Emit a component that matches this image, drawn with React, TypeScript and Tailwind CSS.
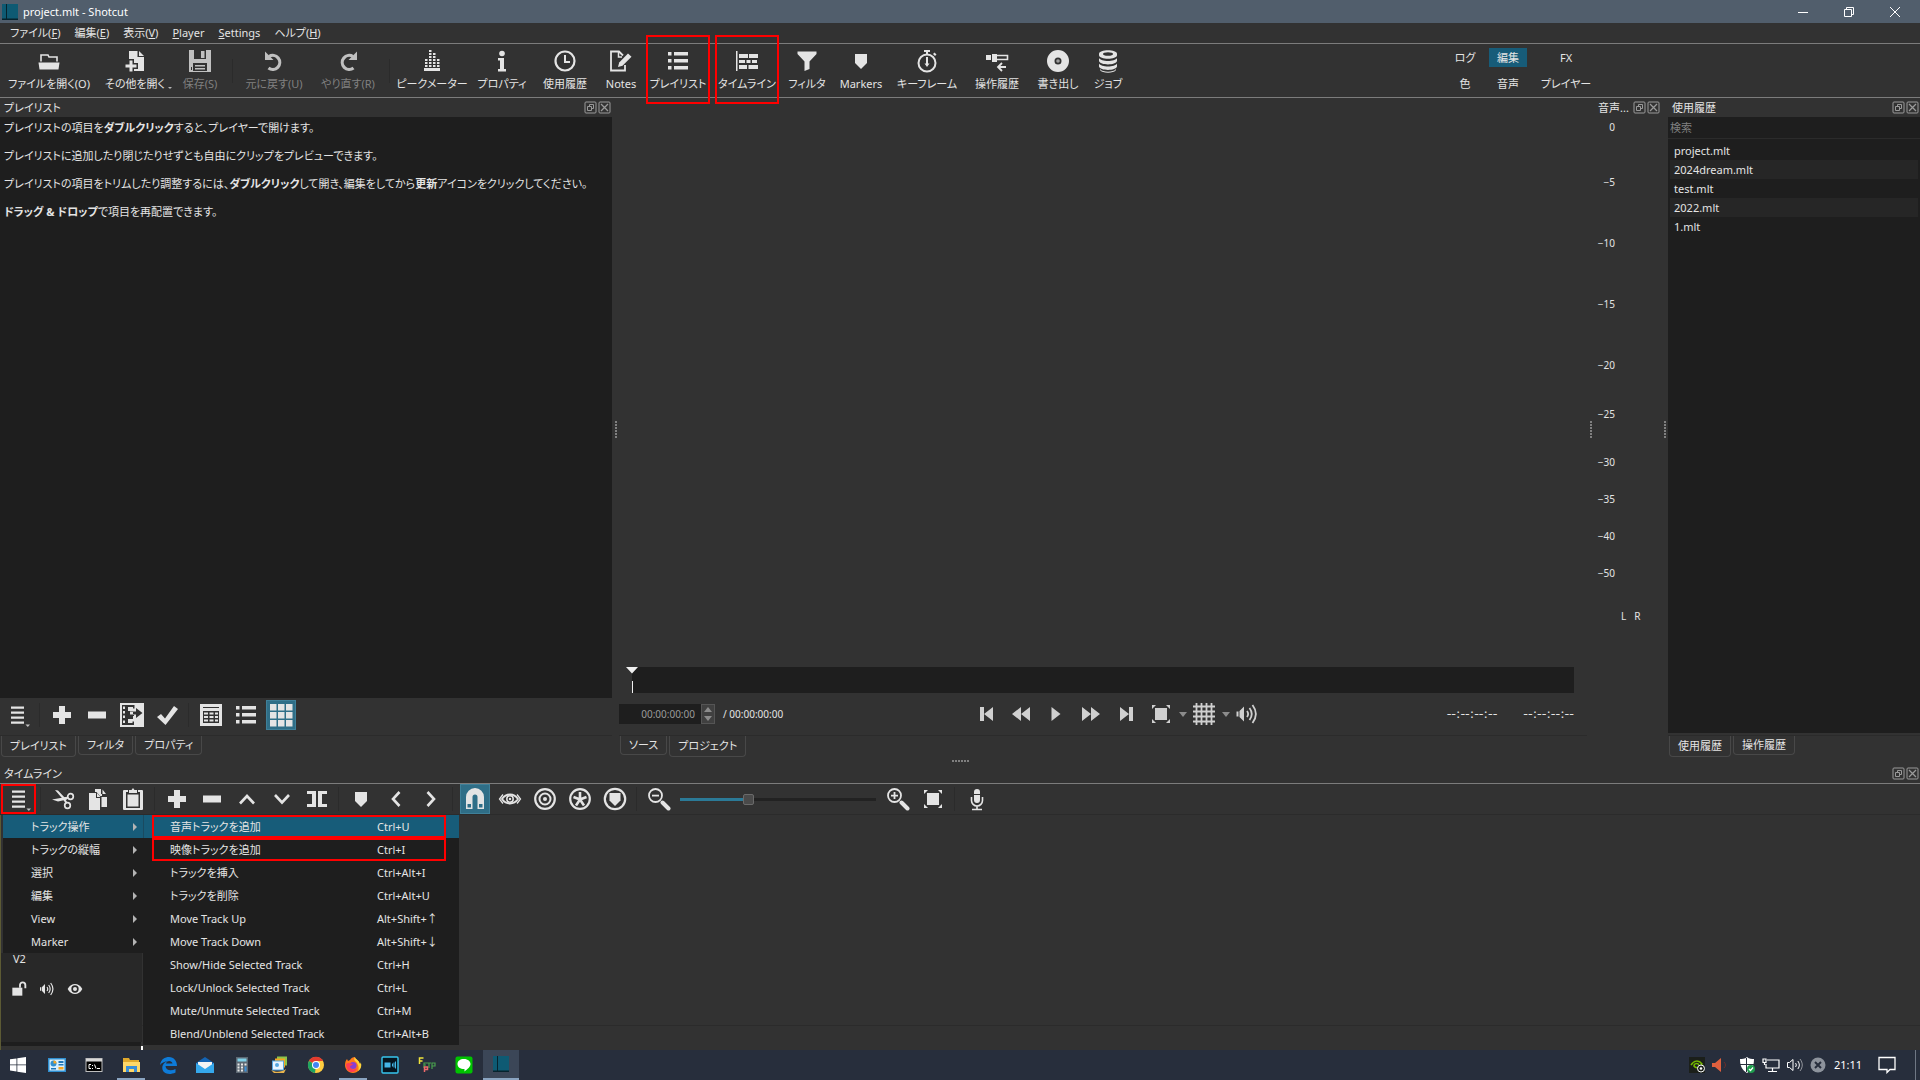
import React, { useState } from 'react';

const HIGHLIGHT = 'bg-[#175c79]';

type IconProps = { size?: string; children: React.ReactNode };

const Icon: React.FC<IconProps> = ({ size = 'size-6', children }) => (
  <svg viewBox="0 0 24 24" className={`${size} shrink-0`} fill="currentColor" aria-hidden="true">
    {children}
  </svg>
);

// Icons for the main toolbar
const OpenIcon = () => (
  <Icon>
    <path d="M4 12.500V6h7l1 2h8v4.500" fill="none" stroke="currentColor" strokeWidth="1.600" />
    <path d="M1.500 13.500h21l-1 7h-19z" />
  </Icon>
);
const OpenOtherIcon = () => (
  <Icon>
    <path d="M6 2h8.500v6H21v14H6z" />
    <path d="M16 2l5 5h-5z" />
    <path d="M6.500 11.500h3v4h4v3h-4v4h-3v-4h-4v-3h4z" stroke="#323232" strokeWidth="3" />
    <path d="M6.500 11.500h3v4h4v3h-4v4h-3v-4h-4v-3h4z" />
  </Icon>
);
const SaveIcon = () => (
  <Icon>
    <path fillRule="evenodd" d="M1 1h22v22H1zM6 1v9h12V1zM5 14v8h14v-8zM3 18v3h1v-3z" />
    <path d="M13 2h3.500v7H13zM7 16h10v1.500H7zM7 19h10v1.500H7z" />
  </Icon>
);
const UndoIcon = () => (
  <Icon>
    <path d="M7 7.500a7 7 0 1 1-.5 11.500" fill="none" stroke="currentColor" strokeWidth="3.200" />
    <path d="M3 2.500v8.500h8.500z" />
  </Icon>
);
const RedoIcon = () => (
  <Icon>
    <path d="M17 7.500a7 7 0 1 0 .5 11.500" fill="none" stroke="currentColor" strokeWidth="3.200" />
    <path d="M21 2.500v8.500h-8.500z" />
  </Icon>
);
const PeakIcon = () => (
  <Icon>
    <path d="M4 19h16v3H4z" />
    <path d="M5 16h2.500v2H5zM9 16h2.500v2H9zM13 16h2.500v2H13zM17 16h2.500v2H17zM5 13h2.500v2H5zM9 13h2.500v2H9zM13 13h2.500v2H13zM17 13h2.500v2H17zM5 10h2.500v2H5zM9 10h2.500v2H9zM13 10h2.500v2H13zM17 10h2.500v2H17zM9 7h2.500v2H9zM13 7h2.500v2H13zM9 4h2.500v2H9zM13 4h2.500v2H13zM9 1h2.500v2H9z" />
  </Icon>
);
const InfoIcon = () => (
  <Icon>
    <circle cx="12" cy="4.500" r="2.800" />
    <path d="M8 9h6v11h2v2.500H8V20h2v-8.500H8z" />
  </Icon>
);
const ClockIcon = () => (
  <Icon>
    <circle cx="12" cy="12" r="9.500" fill="none" stroke="currentColor" strokeWidth="2.200" />
    <path d="M12 6v7h5" fill="none" stroke="currentColor" strokeWidth="2" />
  </Icon>
);
const NotesIcon = () => (
  <Icon>
    <path d="M16 16v5.500H2v-19h8l4 4" fill="none" stroke="currentColor" strokeWidth="1.800" />
    <path d="M9.500 2.500V8H13" fill="none" stroke="currentColor" strokeWidth="1.500" />
    <path d="M9 18l1.200-4.500 8.800-9 3.500 3.300-9 9z" />
  </Icon>
);
const ListIcon = () => (
  <Icon>
    <path d="M2 3h3.500v3.500H2zM8 3h14v3.500H8zM2 10h3.500v3.500H2zM8 10h14v3.500H8zM2 17h3.500v3.500H2zM8 17h14v3.500H8z" />
  </Icon>
);
const TimelineIcon = () => (
  <Icon>
    <path d="M1 2h1.500v20H1zM4 5h9v4H4zM14 5h9v4h-9zM4 11h6v3H4zM11.500 11h4v3h-4zM17 11h5v3h-5zM4 16h8v4H4zM13.500 16H23v4h-9.500z" />
  </Icon>
);
const FilterIcon = () => (
  <Icon>
    <path d="M2.500 2.500h19v2.500l-7 7.500V20l-5 2v-9.500L2.500 5z" />
  </Icon>
);
const MarkerIcon = () => (
  <Icon>
    <path d="M6 5h12v9l-6 6-6-6z" />
  </Icon>
);
const StopwatchIcon = () => (
  <Icon>
    <circle cx="12" cy="14" r="8.500" fill="none" stroke="currentColor" strokeWidth="2" />
    <path d="M9 1h6v2H9zM11 3h2v3h-2zM18 5l1.500-1.500 2 2L20 7zM11 8h2v6.500h1.500L12 18l-2.500-3.500H11z" />
  </Icon>
);
const HistoryIcon = () => (
  <Icon>
    <path d="M1 6h5v5H1zM7 5h5v8H7z" />
    <path d="M12 6.500h10.500v4H12" fill="none" stroke="currentColor" strokeWidth="1.600" />
    <path d="M21 18h-7M17 14l-4 4 4 4" fill="none" stroke="currentColor" strokeWidth="1.800" />
  </Icon>
);
const DiscIcon = () => (
  <Icon>
    <path fillRule="evenodd" d="M12 1a11 11 0 1 0 0 22 11 11 0 0 0 0-22zm0 7.500a3.500 3.500 0 1 1 0 7 3.500 3.500 0 0 1 0-7z" />
    <circle cx="12" cy="12" r="1.800" opacity=".6" />
  </Icon>
);
const JobsIcon = () => (
  <Icon>
    <path d="M3 5c0-5 18-5 18 0v1c0 5-18 5-18 0z" />
    <path d="M3 9c2 4 16 4 18 0v3c-1 4.500-17 4.500-18 0z" />
    <path d="M3 14.500c2 4 16 4 18 0v3c-1 4.500-17 4.500-18 0z" />
    <path d="M4 20c2 3.500 14 3.500 16 0v1c-2 3.500-14 3.500-16 0z" />
    <ellipse cx="12" cy="5" rx="5" ry="1.800" fill="#323232" />
  </Icon>
);

// Icons for the playlist, player and timeline bars
const MenuIcon = () => (
  <Icon>
    <path d="M5 3.500h13v2.300H5zM5 8.500h13v2.300H5zM5 13.500h13v2.300H5zM5 18.500h13v2.300H5z" />
    <path d="M19.500 21.500h4.500L21.800 24z" opacity=".8" />
  </Icon>
);
const PlusIcon = () => (
  <Icon>
    <path d="M9 3h6v6h6v6h-6v6H9v-6H3V9h6z" />
  </Icon>
);
const MinusIcon = () => (
  <Icon>
    <rect x="3" y="8.500" width="18" height="7" />
  </Icon>
);
const InsertIcon = () => (
  <Icon>
    <path fillRule="evenodd" d="M0 0h24v24H0zM2 2v20h12v-3.500h-1.500V20H8v-4h5v-3h1v-2h-1V8H8V4h5v1.500h1.500V2zM3 3.500h2V6H3zM3 8h2v2.500H3zM3 12.500h2V15H3zM3 17.500h2V20H3zM10 8.500h6V5l6.500 5-6.500 5v-3.500h-6z" />
  </Icon>
);
const CheckIcon = () => (
  <Icon>
    <path d="M2 14l4-3 4 4.500L19 3l4 3-12.500 16z" />
  </Icon>
);
const DetailsIcon = () => (
  <Icon>
    <path fillRule="evenodd" d="M1 1h22v22H1zM4 4v16h16V4z" />
    <path d="M4 5h16v3H4zM5 9.500h4v2H5zM10.500 9.500h4v2h-4zM16 9.500h3v2h-3zM5 13h4v2H5zM10.500 13h4v2h-4zM16 13h3v2h-3zM5 16.500h4v2H5zM10.500 16.500h4v2h-4zM16 16.500h3v2h-3z" />
  </Icon>
);
const GridIcon = () => (
  <Icon>
    <path d="M1 1h6.500v6.500H1zM9 1h6.500v6.500H9zM17 1h6.500v6.500H17zM1 9h6.500v6.500H1zM9 9h6.500v6.500H9zM17 9h6.500v6.500H17zM1 17h6.500v6.500H1zM9 17h6.500v6.500H9zM17 17h6.500v6.500H17z" />
  </Icon>
);
const CutIcon = () => (
  <Icon>
    <path d="M4 3l3 .5 8 8.500-2 1.500zM1 12.500l14-2.500 1 2.500-9 2z" />
    <circle cx="19.500" cy="9.500" r="2.800" fill="none" stroke="currentColor" strokeWidth="1.700" />
    <circle cx="16.500" cy="18.500" r="2.800" fill="none" stroke="currentColor" strokeWidth="1.700" />
    <path d="M13 12l4-1.500M13 12l2.500 4" stroke="currentColor" strokeWidth="2" />
  </Icon>
);
const CopyIcon = () => (
  <Icon>
    <path d="M3 6h7v5h4v12H3zM11 6l3.500 4H11z" />
    <path d="M9 2h6v5h1v2h-2L10.500 5H9zM16.500 2.500L20 7h-3.500zM15.500 10H21v10h-5.500z" />
  </Icon>
);
const PasteIcon = () => (
  <Icon>
    <path fillRule="evenodd" d="M3 3h4v2H5v16h14V5h-2V3h4a1 1 0 0 1 1 1v18a1 1 0 0 1-1 1H3a1 1 0 0 1-1-1V4a1 1 0 0 1 1-1z" />
    <path d="M8 6V3h2.500L12 1l1.500 2H16v3z" />
    <path d="M6.500 7.500h11v12h-11z" />
  </Icon>
);
const UpIcon = () => (
  <Icon>
    <path d="M5 16.500L12 9l7 7.500" fill="none" stroke="currentColor" strokeWidth="2.600" />
  </Icon>
);
const DownIcon = () => (
  <Icon>
    <path d="M5 8l7 7.500L19 8" fill="none" stroke="currentColor" strokeWidth="2.600" />
  </Icon>
);
const LeftIcon = () => (
  <Icon>
    <path d="M15.500 5l-6.500 7 6.500 7" fill="none" stroke="currentColor" strokeWidth="2.600" />
  </Icon>
);
const RightIcon = () => (
  <Icon>
    <path d="M8.500 5l6.500 7-6.500 7" fill="none" stroke="currentColor" strokeWidth="2.600" />
  </Icon>
);
const SplitIcon = () => (
  <Icon>
    <path d="M2 4h9v16H2v-3h5V7H2zM22 4h-9v16h9v-3h-5V7h5z" />
  </Icon>
);
const MagnetIcon = () => (
  <Icon>
    <path d="M3 22V10a9 9 0 0 1 18 0v12h-6.500V10a2.500 2.500 0 0 0-5 0v12z" />
    <path d="M4.500 17h3.500v3.500H4.500zM16 17h3.500v3.500H16z" fill="#2f6e87" />
  </Icon>
);
const ScrubIcon = () => (
  <Icon>
    <path d="M4 12c4-6 12-6 16 0-4 6-12 6-16 0z" fill="none" stroke="currentColor" strokeWidth="1.800" />
    <circle cx="12" cy="12" r="3.200" fill="none" stroke="currentColor" strokeWidth="1.500" />
    <circle cx="12" cy="12" r="1.200" />
    <path d="M5 7.500L1.500 12 5 16.500M19 7.500l3.500 4.500-3.500 4.500" fill="none" stroke="currentColor" strokeWidth="1.300" />
  </Icon>
);
const RippleIcon = () => (
  <Icon>
    <circle cx="12" cy="12" r="9.800" fill="none" stroke="currentColor" strokeWidth="2.200" />
    <circle cx="12" cy="12" r="5.500" fill="none" stroke="currentColor" strokeWidth="2" />
    <circle cx="12" cy="12" r="2" />
  </Icon>
);
const RippleAllIcon = () => (
  <Icon>
    <circle cx="12" cy="12" r="9.800" fill="none" stroke="currentColor" strokeWidth="2.200" />
    <path d="M12 5v7.500M5.500 10l6.500 2.500M18.500 10L12 12.500M8 18.500l4-6M16 18.500l-4-6" stroke="currentColor" strokeWidth="2.600" />
  </Icon>
);
const RippleMarkersIcon = () => (
  <Icon>
    <circle cx="12" cy="12" r="10.200" fill="none" stroke="currentColor" strokeWidth="2.200" />
    <path d="M6.500 6h11v7.500L12 19l-5.500-5.500z" />
  </Icon>
);
const ZoomOutIcon = () => (
  <Icon>
    <circle cx="8.500" cy="8.500" r="6.500" fill="none" stroke="currentColor" strokeWidth="1.800" />
    <path d="M5 7.700h7v1.800H5z" />
    <path d="M15.500 15.500l6 6" stroke="currentColor" strokeWidth="4" strokeLinecap="round" />
  </Icon>
);
const ZoomInIcon = () => (
  <Icon>
    <circle cx="8.500" cy="8.500" r="6.500" fill="none" stroke="currentColor" strokeWidth="1.800" />
    <path d="M5 7.700h7v1.800H5zM7.600 5h1.800v7H7.600z" />
    <path d="M15.500 15.500l6 6" stroke="currentColor" strokeWidth="4" strokeLinecap="round" />
  </Icon>
);
const FitIcon = () => (
  <Icon>
    <path d="M6 6h12v12H6z" />
    <path d="M3 3h4L3 7zM21 3h-4l4 4zM3 21h4l-4-4zM21 21h-4l4-4z" />
  </Icon>
);
const MicIcon = () => (
  <Icon>
    <path d="M9 5a3 3 0 0 1 6 0v2H9zM9 8h6v5a3 3 0 0 1-6 0z" />
    <path d="M6.500 10v3.500a5.500 5.500 0 0 0 11 0V10M12 19v3M7 22.500h10" fill="none" stroke="currentColor" strokeWidth="1.600" />
  </Icon>
);
const SpeakerIcon = ({ size = 'size-6' }: { size?: string }) => (
  <Icon size={size}>
    <path d="M1.500 9.500h2v5h-2zM4.500 9L9 4.500v15L4.500 15z" />
    <path d="M12 9c1.500 2 1.500 4 0 6M14.500 6c3 4 3 8 0 12M17.500 3c4.500 6 4.500 12 0 18" fill="none" stroke="currentColor" strokeWidth="1.800" />
  </Icon>
);
const LinesIcon = () => (
  <Icon>
    <path d="M4.500 1v22M9.500 1v22M14.500 1v22M19.500 1v22M1 4.500h22M1 9.500h22M1 14.500h22M1 19.500h22" stroke="currentColor" strokeWidth="1.800" />
  </Icon>
);
const SkipPrevIcon = () => (
  <Icon>
    <path d="M6 5h4v14H6zM19 5v14l-9-7z" />
  </Icon>
);
const RewindIcon = () => (
  <Icon>
    <path d="M12 5v14l-9-7zM21 5v14l-9-7z" />
  </Icon>
);
const PlayIcon = () => (
  <Icon>
    <path d="M7.500 5v14l9-7z" />
  </Icon>
);
const ForwardIcon = () => (
  <Icon>
    <path d="M3 5v14l9-7zM12 5v14l9-7z" />
  </Icon>
);
const SkipNextIcon = () => (
  <Icon>
    <path d="M6 5v14l9-7zM15 5h4v14h-4z" />
  </Icon>
);

const ShotcutLogo = ({ size }: { size: string }) => (
  <svg viewBox="0 0 16 16" className={size} aria-hidden="true">
    <path d="M0 0h16v15H0z" fill="#0e5a73" />
    <path d="M4 0h1v16H4zM0 14.500h16V16H0z" fill="#06232d" />
  </svg>
);

const toolbarGroups = [
  [
    { label: 'ファイルを開く(O)', icon: <OpenIcon />, width: 'w-[98px]' },
    { label: 'その他を開く', icon: <OpenOtherIcon />, width: 'w-[74px]', arrow: true },
    { label: '保存(S)', icon: <SaveIcon />, width: 'w-[56px]', disabled: true },
  ],
  [
    { label: '元に戻す(U)', icon: <UndoIcon />, width: 'w-[74px]', disabled: true },
    { label: 'やり直す(R)', icon: <RedoIcon />, width: 'w-[74px]', disabled: true },
  ],
  [
    { label: 'ピークメーター', icon: <PeakIcon />, width: 'w-[76px]' },
    { label: 'プロパティ', icon: <InfoIcon />, width: 'w-[64px]' },
    { label: '使用履歴', icon: <ClockIcon />, width: 'w-[62px]' },
    { label: 'Notes', icon: <NotesIcon />, width: 'w-[50px]' },
    { label: 'プレイリスト', icon: <ListIcon />, width: 'w-[64px]', marked: true },
    { label: 'タイムライン', icon: <TimelineIcon />, width: 'w-[74px]', marked: true },
    { label: 'フィルタ', icon: <FilterIcon />, width: 'w-[46px]' },
    { label: 'Markers', icon: <MarkerIcon />, width: 'w-[62px]' },
    { label: 'キーフレーム', icon: <StopwatchIcon />, width: 'w-[70px]' },
    { label: '操作履歴', icon: <HistoryIcon />, width: 'w-[70px]' },
    { label: '書き出し', icon: <DiscIcon />, width: 'w-[52px]' },
    { label: 'ジョブ', icon: <JobsIcon />, width: 'w-[48px]' },
  ],
];

const menus = [
  { text: 'ファイル', key: 'F' },
  { text: '編集', key: 'E' },
  { text: '表示', key: 'V' },
  { text: 'Player' },
  { text: 'Settings' },
  { text: 'ヘルプ', key: 'H' },
];

const modes = ['ログ', '編集', 'FX', '色', '音声', 'プレイヤー'];

const recentFiles = ['project.mlt', '2024dream.mlt', 'test.mlt', '2022.mlt', '1.mlt'];

const meterScale = [
  { label: '0', height: 'h-[55px]' },
  { label: '−5', height: 'h-[61px]' },
  { label: '−10', height: 'h-[61px]' },
  { label: '−15', height: 'h-[61px]' },
  { label: '−20', height: 'h-[49px]' },
  { label: '−25', height: 'h-[48px]' },
  { label: '−30', height: 'h-[37px]' },
  { label: '−35', height: 'h-[37px]' },
  { label: '−40', height: 'h-[37px]' },
  { label: '−50', height: 'h-[43px]' },
];

const trackMenu = ['トラック操作', 'トラックの縦幅', '選択', '編集', 'View', 'Marker'];

const trackActions = [
  { label: '音声トラックを追加', keys: 'Ctrl+U', marked: true },
  { label: '映像トラックを追加', keys: 'Ctrl+I', marked: true },
  { label: 'トラックを挿入', keys: 'Ctrl+Alt+I' },
  { label: 'トラックを削除', keys: 'Ctrl+Alt+U' },
  { label: 'Move Track Up', keys: 'Alt+Shift+↑' },
  { label: 'Move Track Down', keys: 'Alt+Shift+↓' },
  { label: 'Show/Hide Selected Track', keys: 'Ctrl+H' },
  { label: 'Lock/Unlock Selected Track', keys: 'Ctrl+L' },
  { label: 'Mute/Unmute Selected Track', keys: 'Ctrl+M' },
  { label: 'Blend/Unblend Selected Track', keys: 'Ctrl+Alt+B' },
];

const RedFrame = ({ inset }: { inset: string }) => (
  <span className={`pointer-events-none absolute z-20 border-2 border-[#ff0000] ${inset}`} />
);

const DockButtons = () => (
  <span className="flex gap-px text-[#9a9a9a]">
    <button aria-label="Float" className="size-[13px]">
      <svg viewBox="0 0 13 13" className="size-full" fill="none" stroke="currentColor">
        <rect x="1" y="1" width="11" height="11" rx="1" />
        <path d="M5.500 5V3.500h4v4H8M3.500 5.500h4v4h-4z" />
      </svg>
    </button>
    <button aria-label="Close" className="size-[13px]">
      <svg viewBox="0 0 13 13" className="size-full" fill="none" stroke="currentColor">
        <rect x="1" y="1" width="11" height="11" rx="1" />
        <path d="M3 3l7 7M10 3l-7 7" strokeWidth="1.300" />
      </svg>
    </button>
  </span>
);

const DockTitle = ({ title }: { title: string }) => (
  <div className="flex h-[19px] shrink-0 items-center justify-between pl-1 pr-px">
    <h2 className="whitespace-nowrap">{title}</h2>
    <DockButtons />
  </div>
);

const ToolButton = ({ label, active, children }: { label: string; active?: boolean; children: React.ReactNode }) => (
  <span className="flex w-[35px] shrink-0 justify-center">
    <button
      aria-label={label}
      className={`flex h-[30px] w-[30px] items-center justify-center ${active ? 'border border-[#3f8099] bg-[#2f6e87]' : ''}`}
    >
      {children}
    </button>
  </span>
);

const Separator = () => (
  <span className="flex w-[9px] shrink-0 items-center justify-center">
    <span className="h-6 w-px bg-[#2b2b2b]" />
  </span>
);

const Tabs = ({ items, active }: { items: string[]; active: number }) => (
  <div className="flex h-[22px] shrink-0 items-start gap-0.5 border-t border-[#2b2b2b] pl-px">
    {items.map((item, i) => (
      <button
        key={item}
        className={`whitespace-nowrap rounded-b-sm border border-t-0 border-[#484848] px-2 ${i === active ? 'h-[21px]' : 'h-[19px]'}`}
      >
        {item}
      </button>
    ))}
  </div>
);

const SplitHandle = () => (
  <div className="flex w-[7px] shrink-0 justify-center">
    <span className="mt-[323px] h-[18px] w-0.5 bg-[repeating-linear-gradient(#808080_0_2px,transparent_2px_3px)]" />
  </div>
);

const PlaylistDock = () => (
  <section className="flex w-[612px] shrink-0 flex-col">
    <DockTitle title="プレイリスト" />
    <div className="flex-1 space-y-3 overflow-hidden bg-[#1e1e1e] px-1 pt-[3px] leading-4 text-[#e4e4e4]">
      <p>プレイリストの項目を<b>ダブルクリック</b>すると、プレイヤーで開けます。</p>
      <p>プレイリストに追加したり閉じたりせずとも自由にクリップをプレビューできます。</p>
      <p className="whitespace-nowrap">
        プレイリストの項目をトリムしたり調整するには、<b>ダブルクリック</b>して開き、編集をしてから<b>更新</b>アイコンをクリックしてください。
      </p>
      <p><b>ドラッグ &amp; ドロップ</b>で項目を再配置できます。</p>
    </div>
    <div className="flex h-[37px] shrink-0 items-center pb-1">
      <ToolButton label="Menu"><MenuIcon /></ToolButton>
      <Separator />
      <ToolButton label="Add"><PlusIcon /></ToolButton>
      <ToolButton label="Remove"><MinusIcon /></ToolButton>
      <ToolButton label="Insert"><InsertIcon /></ToolButton>
      <ToolButton label="Update"><CheckIcon /></ToolButton>
      <Separator />
      <ToolButton label="Details"><DetailsIcon /></ToolButton>
      <ToolButton label="Tiles"><ListIcon /></ToolButton>
      <ToolButton label="Icons" active><GridIcon /></ToolButton>
    </div>
    <Tabs items={['プレイリスト', 'フィルタ', 'プロパティ']} active={0} />
  </section>
);

const Caret = () => (
  <svg viewBox="0 0 8 5" className="h-[5px] w-2 text-[#8c8c8c]" fill="currentColor" aria-hidden="true">
    <path d="M0 0h8L4 5z" />
  </svg>
);

const PlayerDock = () => (
  <section className="flex min-w-0 flex-1 flex-col">
    <div className="flex-1" />
    <div className="relative mb-1 ml-[13px] mr-[13px] h-[26px] bg-[#1e1e1e]">
      <svg viewBox="0 0 12 26" className="absolute -left-1.5 top-0 h-[26px] w-3" fill="#f0f0f0" aria-hidden="true">
        <path d="M0 0h12L6 6.500zM6 14h1v12H6z" />
      </svg>
    </div>
    <div className="grid h-[38px] shrink-0 grid-cols-[1fr_auto_1fr] items-center pb-1 pr-[13px]">
      <div className="flex items-center">
        <input
          aria-label="Position"
          defaultValue="00:00:00:00"
          className="h-5 w-[82px] bg-[#1e1e1e] pr-1.5 text-right text-[10px] text-[#9a9a9a]"
        />
        <span className="flex h-5 w-3.5 flex-col items-center justify-center gap-1 border border-[#555] bg-[#404040]">
          <button aria-label="Step up" className="rotate-180"><Caret /></button>
          <button aria-label="Step down"><Caret /></button>
        </span>
        <span className="ml-2 text-[10px]">/ 00:00:00:00</span>
      </div>
      <div className="flex items-center pl-10 text-[#d0d0d0]">
        <ToolButton label="Skip previous"><SkipPrevIcon /></ToolButton>
        <ToolButton label="Rewind"><RewindIcon /></ToolButton>
        <ToolButton label="Play"><PlayIcon /></ToolButton>
        <ToolButton label="Fast forward"><ForwardIcon /></ToolButton>
        <ToolButton label="Skip next"><SkipNextIcon /></ToolButton>
        <ToolButton label="Zoom fit"><FitIcon /></ToolButton>
        <Caret />
        <ToolButton label="Grid"><LinesIcon /></ToolButton>
        <Caret />
        <ToolButton label="Volume"><SpeakerIcon /></ToolButton>
      </div>
      <div className="flex justify-end gap-[26px] font-['DejaVu_Sans',sans-serif] text-[13px]">
        <span>--:--:--:--</span>
        <span>--:--:--:--</span>
      </div>
    </div>
    <Tabs items={['ソース', 'プロジェクト']} active={1} />
  </section>
);

const AudioDock = () => (
  <section className="flex w-[67px] shrink-0 flex-col">
    <DockTitle title="音声..." />
    <ul className="w-[21px] pt-0.5 text-[10px] leading-4">
      {meterScale.map(mark => (
        <li key={mark.label} className={`flex justify-end whitespace-nowrap ${mark.height}`}>{mark.label}</li>
      ))}
    </ul>
    <div className="flex gap-2 pl-[27px] text-[10px] leading-4">
      <span>L</span>
      <span>R</span>
    </div>
  </section>
);

const RecentDock = () => (
  <section className="flex w-[252px] shrink-0 flex-col">
    <DockTitle title="使用履歴" />
    <div className="flex flex-1 flex-col bg-[#1e1e1e]">
      <input
        type="search"
        aria-label="検索"
        placeholder="検索"
        className="h-[22px] border-b border-[#2b2b2b] bg-transparent px-0.5 placeholder:text-[#808080]"
      />
      <ul className="px-0.5 pt-0.5">
        {recentFiles.map((file, i) => (
          <li key={file} className={`flex h-[19px] items-center pl-1 ${i % 2 ? 'bg-[#262626]' : ''}`}>{file}</li>
        ))}
      </ul>
    </div>
    <div className="h-[2px] shrink-0" />
    <Tabs items={['使用履歴', '操作履歴']} active={0} />
  </section>
);

const TrackMenus = () => (
  <div className="absolute left-0.5 top-0 z-10 flex items-start">
    <ul role="menu" className="w-[140px] bg-[#1e1e1e]">
      {trackMenu.map((item, i) => (
        <li key={item}>
          <button role="menuitem" className={`flex h-[23px] w-full items-center justify-between pl-7 pr-1.5 ${i === 0 ? HIGHLIGHT : ''}`}>
            {item}
            <svg viewBox="0 0 4 8" className="h-2 w-1" fill="#b4b4b4" aria-hidden="true">
              <path d="M0 0l4 4-4 4z" />
            </svg>
          </button>
        </li>
      ))}
    </ul>
    <ul role="menu" className="w-[316px] bg-[#1e1e1e]">
      {trackActions.map((action, i) => (
        <li key={action.label} className="relative">
          <button role="menuitem" className={`grid h-[23px] w-full grid-cols-[207px_1fr] items-center border-l pl-[26px] text-left ${i === 0 ? `border-[#1a4a60] ${HIGHLIGHT}` : 'border-transparent'}`}>
            <span className="whitespace-nowrap">{action.label}</span>
            <span className="whitespace-nowrap">{action.keys}</span>
          </button>
          {action.marked && <RedFrame inset="inset-y-0 left-[9px] right-[13px]" />}
        </li>
      ))}
    </ul>
  </div>
);

const TimelineDock = () => {
  const [zoom, setZoom] = useState(34);

  return (
    <section className="shrink-0">
      <DockTitle title="タイムライン" />
      <div className="flex h-8 items-center border-b border-t border-b-[#2b2b2b] border-t-[#7c7c7c] pl-px">
        <span className="relative">
          <ToolButton label="Timeline menu"><MenuIcon /></ToolButton>
          <RedFrame inset="inset-0" />
        </span>
        <Separator />
        <ToolButton label="Cut"><CutIcon /></ToolButton>
        <ToolButton label="Copy"><CopyIcon /></ToolButton>
        <ToolButton label="Paste"><PasteIcon /></ToolButton>
        <Separator />
        <ToolButton label="Append"><PlusIcon /></ToolButton>
        <ToolButton label="Ripple delete"><MinusIcon /></ToolButton>
        <ToolButton label="Lift"><UpIcon /></ToolButton>
        <ToolButton label="Overwrite"><DownIcon /></ToolButton>
        <ToolButton label="Split"><SplitIcon /></ToolButton>
        <Separator />
        <ToolButton label="Marker"><MarkerIcon /></ToolButton>
        <ToolButton label="Previous marker"><LeftIcon /></ToolButton>
        <ToolButton label="Next marker"><RightIcon /></ToolButton>
        <Separator />
        <ToolButton label="Snap" active><MagnetIcon /></ToolButton>
        <ToolButton label="Scrub"><ScrubIcon /></ToolButton>
        <ToolButton label="Ripple"><RippleIcon /></ToolButton>
        <ToolButton label="Ripple all tracks"><RippleAllIcon /></ToolButton>
        <ToolButton label="Ripple markers"><RippleMarkersIcon /></ToolButton>
        <Separator />
        <ToolButton label="Zoom out"><ZoomOutIcon /></ToolButton>
        <input
          type="range"
          aria-label="Zoom"
          value={zoom}
          onChange={e => setZoom(Number(e.target.value))}
          className="mx-1 h-[3px] w-[196px] appearance-none bg-[linear-gradient(to_right,#2b7a97_34%,#222_34%)] [&::-webkit-slider-thumb]:size-[11px] [&::-webkit-slider-thumb]:appearance-none [&::-webkit-slider-thumb]:rounded-xs [&::-webkit-slider-thumb]:border [&::-webkit-slider-thumb]:border-[#6a6a6a] [&::-webkit-slider-thumb]:bg-[#4a4a4a]"
        />
        <ToolButton label="Zoom in"><ZoomInIcon /></ToolButton>
        <ToolButton label="Zoom fit timeline"><FitIcon /></ToolButton>
        <Separator />
        <ToolButton label="Record audio"><MicIcon /></ToolButton>
      </div>
      <div className="relative flex h-[235px] flex-col justify-end border-l border-[#5c5a34]">
        <TrackMenus />
        <div className="flex">
          <div className="w-[141px] bg-[#282828] pb-[41px] pl-1.5">
            <p className="pl-1.5 leading-3">V2</p>
            <div className="flex gap-1 pt-3">
              <button aria-label="Lock" className="flex size-6 items-center justify-center">
                <Icon size="size-4">
                  <path d="M2 10h15v12H2z" />
                  <path d="M13.500 10V6a4 4 0 0 1 8 0v5" fill="none" stroke="currentColor" strokeWidth="2.800" />
                </Icon>
              </button>
              <button aria-label="Mute" className="flex size-6 items-center justify-center"><SpeakerIcon size="size-4" /></button>
              <button aria-label="Hide" className="flex size-6 items-center justify-center">
                <Icon size="size-4">
                  <path fillRule="evenodd" d="M1 12C6 2 18 2 23 12 18 22 6 22 1 12zm11-5.500a5.500 5.500 0 1 0 0 11 5.500 5.500 0 0 0 0-11z" />
                  <circle cx="12" cy="12" r="3" />
                </Icon>
              </button>
            </div>
          </div>
          <div className="mb-4 flex-1 border-b border-[#2b2b2b]" />
        </div>
        <div className="flex h-2">
          <span className="mb-1 w-[140px] bg-[#1e1e1e]" />
          <span className="mt-1 w-0.5 bg-white" />
        </div>
      </div>
    </section>
  );
};

// Taskbar drawings
const taskbarApps = [
  {
    name: 'Control Panel',
    art: (
      <>
        <rect x="0" y="2" width="18" height="14" fill="#2f8fd0" />
        <rect x="1.500" y="3.500" width="15" height="11" fill="#d8f0ff" />
        <circle cx="5.500" cy="7.500" r="3" fill="#2f8fd0" />
        <path d="M5.500 7.500V4.500a3 3 0 0 1 3 3z" fill="#f5a623" />
        <path d="M10.500 5h5v2h-5zM10.500 8h5v1.500h-5zM3 12h5v1.500H3z" fill="#1f77b8" />
        <path d="M10.500 11h5v2.500h-5z" fill="#f5a623" />
      </>
    ),
  },
  {
    name: 'Command Prompt',
    art: (
      <>
        <rect x="1" y="2.500" width="16" height="13" fill="#000" stroke="#bdbdbd" />
        <path d="M1 3h16v2.500H1z" fill="#d8d8d8" />
        <path d="M6 8.500H4v4h2M7.500 9v1M7.500 12v1M9.500 8.500l1.500 4M12 12.500h3" fill="none" stroke="#fff" />
      </>
    ),
  },
  {
    name: 'Explorer',
    running: true,
    art: (
      <>
        <path d="M1 2h6l1 2h9v12H1z" fill="#e0a92c" />
        <path d="M1 6h17v10H1z" fill="#ffd868" />
        <path d="M4 16v-6h11v6h-3v-3H7v3z" fill="#3b8fd6" />
      </>
    ),
  },
  {
    name: 'Edge',
    art: <path d="M1 9C2 3 6 1 10 1c5 0 8 4 8 9H6.500c.5 5 6 5 10 3v3.500C9 20 2 17 3.500 10 4.500 7 7 5.500 9 5.300 6 5.300 3 6.500 1 9zm6-1.500h6.500C13 4 7.500 4 7 7.500z" fill="#0e7bd8" />,
  },
  {
    name: 'Mail',
    art: (
      <>
        <path d="M0 7l9-6 9 6v10H0z" fill="#1464b4" />
        <path d="M2 6h14v4l-7 4-7-4z" fill="#f4f4f4" />
        <path d="M0 7l9 6 9-6v10H0z" fill="#35a8ec" />
      </>
    ),
  },
  {
    name: 'Calculator',
    art: (
      <>
        <rect x="3" y="1" width="12" height="16" fill="#5d6873" />
        <rect x="4.500" y="2.500" width="9" height="3" fill="#7fd0e8" />
        <path d="M4.500 7.500h2v2h-2zM8 7.500h2v2H8zM4.500 10.500h2v2h-2zM8 10.500h2v2H8zM4.500 13.500h2v2h-2zM8 13.500h2v2H8zM11.500 7.500h2v2h-2z" fill="#e8e8e8" />
        <path d="M11.500 10.500h2v5h-2z" fill="#3b8fd6" />
      </>
    ),
  },
  {
    name: 'Photos',
    art: (
      <>
        <rect x="7" y="0.500" width="10" height="9" fill="#8bc34a" />
        <rect x="5" y="2.500" width="10" height="9" fill="#f5a623" />
        <rect x="2.500" y="5" width="11" height="9" fill="#eaf5ff" stroke="#57a7e0" />
        <circle cx="7" cy="9" r="2" fill="#57a7e0" />
        <path d="M1 14c5 3 11 2 15-1l-2 4H4z" fill="#e9b44c" />
      </>
    ),
  },
  {
    name: 'Chrome',
    art: (
      <>
        <circle cx="9" cy="9" r="8" fill="#ffcd40" />
        <path d="M9 9L2 5a8 8 0 0 1 14 0H9z" fill="#e33b2e" />
        <path d="M9 9l-1 8A8 8 0 0 1 2 5z" fill="#1da462" />
        <circle cx="9" cy="9" r="4" fill="#fff" />
        <circle cx="9" cy="9" r="3" fill="#4285f4" />
      </>
    ),
  },
  {
    name: 'Firefox',
    running: true,
    art: (
      <>
        <path d="M1 9c0-3 1-5 2-6l1 2 2-1c1-2 3-3 5-3 0 2 3 3 4 5 3 7-1 11-6 11s-8-4-8-8z" fill="#ff7a1a" />
        <path d="M11 1c0 2 4 3 5 7 1-1 1-2 0-4 3 7 0 10-2 11 2-4-1-9-3-10-1-1-1-3 0-4z" fill="#ffd43a" />
        <circle cx="9" cy="9.500" r="3.600" fill="#8a3fd1" />
        <path d="M2 8c3-2 5 0 7 0-1 2-3 1-3 3 1 3 5 3 7 1-1 6-11 6-11-4z" fill="#ff3d54" />
      </>
    ),
  },
  {
    name: 'Screen recorder',
    art: (
      <>
        <rect x="1" y="1" width="16" height="16" rx="1" fill="#05141f" stroke="#37c5ee" strokeWidth="1.400" />
        <path d="M3.500 6.500h6v5h-6z" fill="#45b5e6" />
        <path d="M11.500 7.500v3M13 6.500v5M14.500 5.500v7" stroke="#45b5e6" />
      </>
    ),
  },
  {
    name: 'FFFTP',
    art: (
      <>
        <path d="M1.500 8V2h4M1.500 5h3" fill="none" stroke="#f0e33a" strokeWidth="1.500" />
        <path d="M6 12V7h3M6 9h2M9 7h4M11 7v5M14 13V7h3v3h-3" fill="none" stroke="#4aa04e" strokeWidth="1.200" />
        <path d="M6.500 16v-5h3v2.500h-3" fill="none" stroke="#f06a6a" strokeWidth="1.500" />
      </>
    ),
  },
  {
    name: 'LINE',
    art: (
      <>
        <rect x="0.500" y="0.500" width="17" height="17" rx="2" fill="#00c300" />
        <path d="M9 3c4 0 6.500 2.500 6.500 5 0 3-3 5-6 7.500V13C5 13 2.500 11 2.500 8S5 3 9 3z" fill="#fff" />
      </>
    ),
  },
];

const Taskbar = () => (
  <footer className="flex h-[30px] shrink-0 items-stretch justify-between bg-[#272e3c]">
    <nav className="flex gap-px">
      <button aria-label="Start" className="flex w-[38px] items-center justify-center pr-0.5">
        <svg viewBox="0 0 16 16" className="size-4" fill="#fff" aria-hidden="true">
          <path d="M0 2.300l6.500-.9v6.100H0zM7.300 1.300L16 0v7.500H7.300zM0 8.300h6.500v6.200L0 13.600zM7.300 8.300H16V16l-8.700-1.300z" />
        </svg>
      </button>
      {taskbarApps.map(app => (
        <button key={app.name} aria-label={app.name} className="relative flex w-9 items-center justify-center">
          <svg viewBox="0 0 18 18" className="size-[18px]" aria-hidden="true">{app.art}</svg>
          {app.running && <span className="absolute inset-x-1 bottom-0 h-0.5 bg-[#8aa4c0]" />}
        </button>
      ))}
      <button aria-label="Shotcut" className="flex w-9 items-center justify-center border-b-2 border-[#8aa4c0] bg-[#3b4657]">
        <ShotcutLogo size="size-4" />
      </button>
    </nav>
    <div className="flex items-center gap-[7px] text-white">
      <svg viewBox="0 0 16 16" className="size-4" aria-hidden="true">
        <path d="M0 0h16v16H0z" fill="#1b1f1a" />
        <path d="M2 8c3-5 8-5 11-1-2 4-6 5-8 2 0-3 4-3 5-1" fill="none" stroke="#76b900" strokeWidth="1.500" />
        <circle cx="12" cy="11.500" r="3.500" fill="#1b1f1a" stroke="#fff" />
        <circle cx="12" cy="11.500" r="1.300" fill="#fff" />
      </svg>
      <svg viewBox="0 0 16 16" className="size-4" aria-hidden="true">
        <path d="M0 6h3l6-5v14l-6-5H0z" fill="#e0603e" />
        <path d="M12 5c2 2 2 4 0 6" fill="none" stroke="#6a2f2c" />
      </svg>
      <svg viewBox="0 0 16 16" className="ml-1 size-4" aria-hidden="true">
        <path d="M8 0c2 2 5 2 7 2 0 7-2 11-7 14C3 13 1 9 1 2c2 0 5 0 7-2z" fill="#fff" />
        <path d="M7.500 1v14M1 7.500h14" stroke="#272e3c" />
        <circle cx="12" cy="12" r="4" fill="#1f9d4d" />
        <path d="M10 12l1.500 1.500L14 10.500" fill="none" stroke="#fff" strokeWidth="1.200" />
      </svg>
      <svg viewBox="0 0 18 16" className="h-4 w-[18px]" fill="none" stroke="currentColor" strokeWidth="1.200" aria-hidden="true">
        <path d="M5 3h12v8H4V7M10.500 11v3.500M6 14.500h9M1 2h3v3.500H1zM2.500 5.500V8" />
      </svg>
      <svg viewBox="0 0 16 16" className="size-4" fill="none" stroke="currentColor" aria-hidden="true">
        <path d="M.5 5.500h2l3.500-3v11l-3.500-3h-2zM8.500 6c1 1.300 1 2.700 0 4M10.800 4c2 2.600 2 5.400 0 8" />
        <path d="M13 2c3 4 3 8 0 12" opacity=".5" />
      </svg>
      <svg viewBox="0 0 16 16" className="size-4" aria-hidden="true">
        <circle cx="8" cy="8" r="7.500" fill="#8d939c" />
        <path d="M5 5l6 6M11 5l-6 6" stroke="#272e3c" strokeWidth="2" />
      </svg>
      <time className="w-[30px] text-center">21:11</time>
      <button aria-label="Notifications" className="ml-2 mr-2 size-[18px]">
        <svg viewBox="0 0 18 18" className="size-full" fill="none" stroke="currentColor" strokeWidth="1.300" aria-hidden="true">
          <path d="M1 1.500h16v12h-5l-3 3v-3H1z" />
        </svg>
      </button>
      <span className="ml-1 mr-1 h-full w-px bg-[#6f7784]" />
    </div>
  </footer>
);

const App: React.FC = () => {
  const [mode, setMode] = useState('編集');

  return (
    <div className="flex h-screen flex-col overflow-hidden bg-[#323232] font-['Noto_Sans','Noto_Sans_CJK_JP',sans-serif] text-[11px] leading-4 text-[#e4e4e4] [font-feature-settings:'palt']">
      <header className="flex h-[23px] shrink-0 items-center justify-between bg-[#515e6c] text-white">
        <div className="flex items-center gap-[5px] pl-0.5">
          <ShotcutLogo size="size-4" />
          <h1>project.mlt - Shotcut</h1>
        </div>
        <div className="flex pr-0.5">
          <button aria-label="Minimize" className="flex w-[46px] justify-center">
            <svg viewBox="0 0 10 10" className="size-2.5" stroke="currentColor"><path d="M0 5.500h10" /></svg>
          </button>
          <button aria-label="Restore" className="flex w-[46px] justify-center">
            <svg viewBox="0 0 10 10" className="size-2.5" fill="none" stroke="currentColor"><path d="M.5 2.500h7v7h-7zM2.500 2.500v-2h7v7h-2" /></svg>
          </button>
          <button aria-label="Close window" className="flex w-[46px] justify-center">
            <svg viewBox="0 0 10 10" className="size-2.5" fill="none" stroke="currentColor"><path d="M0 0l10 10M10 0L0 10" /></svg>
          </button>
        </div>
      </header>

      <nav className="flex h-5 shrink-0 items-center gap-[14px] pl-2.5">
        {menus.map(menu => (
          <button key={menu.text} className="whitespace-nowrap">
            {menu.key ? <>{menu.text}(<u>{menu.key}</u>)</> : <><u>{menu.text[0]}</u>{menu.text.slice(1)}</>}
          </button>
        ))}
      </nav>

      <div className="flex h-[55px] shrink-0 border-y border-[#7c7c7c]">
        {toolbarGroups.map((group, g) => (
          <React.Fragment key={g}>
            {g > 0 && <Separator />}
            {group.map(tool => (
              <button
                key={tool.label}
                disabled={tool.disabled}
                className={`relative flex shrink-0 flex-col items-center gap-[3px] whitespace-nowrap pt-[5px] ${tool.width} ${tool.disabled ? 'text-[#808080]' : ''}`}
              >
                <span className={tool.disabled ? 'text-[#c0c0c0]' : ''}>{tool.icon}</span>
                <span>{tool.label}</span>
                {tool.arrow && <span className="absolute bottom-2 right-0 border-x-2 border-t-2 border-x-transparent border-t-[#b4b4b4]" />}
                {tool.marked && <RedFrame inset="-bottom-[7px] -top-[9px] left-1/2 w-16 -translate-x-1/2" />}
              </button>
            ))}
          </React.Fragment>
        ))}
        <div className="ml-auto mr-[318px] grid grid-cols-[42px_44px_72px] content-start justify-items-center gap-y-[7px] pt-1">
          {modes.map(name => (
            <button
              key={name}
              onClick={() => setMode(name)}
              className={`h-[19px] whitespace-nowrap px-2 ${name === mode ? HIGHLIGHT : ''}`}
            >
              {name}
            </button>
          ))}
        </div>
      </div>

      <main className="flex min-h-0 flex-1">
        <PlaylistDock />
        <SplitHandle />
        <PlayerDock />
        <SplitHandle />
        <AudioDock />
        <SplitHandle />
        <RecentDock />
      </main>
      <div className="flex h-[7px] shrink-0 items-center justify-center pl-0.5">
        <span className="h-0.5 w-[18px] bg-[repeating-linear-gradient(to_right,#808080_0_2px,transparent_2px_3px)]" />
      </div>
      <TimelineDock />
      <Taskbar />
    </div>
  );
};

export default App;
